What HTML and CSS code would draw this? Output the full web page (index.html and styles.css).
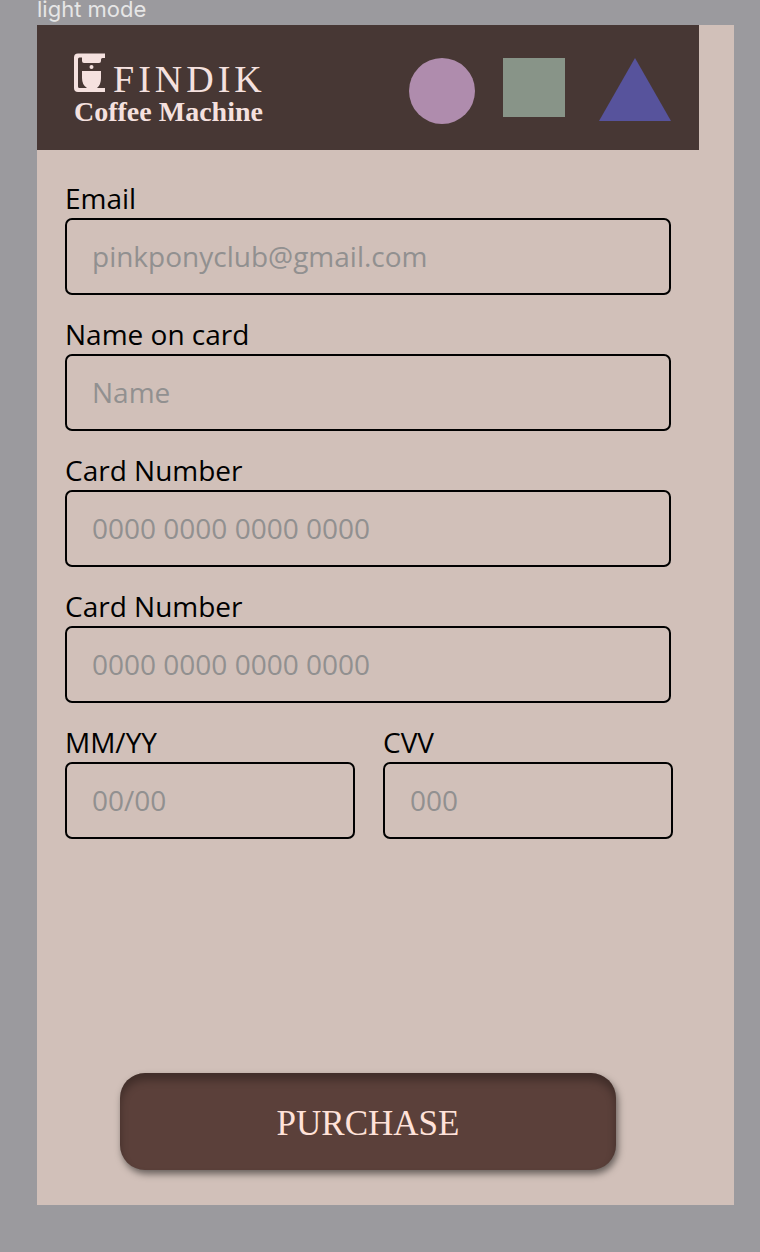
FILE: index.html
```html
<!DOCTYPE html>
<html lang="en">
<head>
    <meta charset="UTF-8">
    <meta name="viewport" content="width=device-width, initial-scale=1.0">
    <title>Findik Coffee Machine</title>
    <link rel="stylesheet" href="styles.css">
</head>
<body>
    <p class="mode">light mode</p>
    <div class="container">
        <header>
            <div class="logo">
                <div class="brand">
                    <svg width="31" height="39" viewBox="0 0 31 39" fill="#f5e1df" aria-hidden="true">
                        <path d="M4 .5H31V5H28.500Q27 5 27 6.500V8Q27 10 25 10H10Q8 10 8 8V4.500H5.500Q4 4.500 4 6V33.500Q4 35 5.500 35H13Q8 32 8 25V18H27V25Q27 32 23 35H31V39H4Q0 39 0 35V4.500Q0 .5 4 .5Z"/>
                        <circle cx="17.500" cy="14" r="2"/>
                    </svg>
                    <span class="name">FINDIK</span>
                </div>
                <div class="tagline">Coffee Machine</div>
            </div>
            <div class="shapes">
                <div class="circle"></div>
                <div class="square"></div>
                <svg width="78" height="63" viewBox="0 0 78 63" aria-hidden="true">
                    <path d="M42 0L78 63H6Z" fill="#57539c"/>
                </svg>
            </div>
        </header>

        <form>
            <div class="field">
                <label for="email">Email</label>
                <input type="email" id="email" placeholder="pinkponyclub@gmail.com">
            </div>
            <div class="field">
                <label for="name">Name on card</label>
                <input type="text" id="name" placeholder="Name">
            </div>
            <div class="field">
                <label for="card">Card Number</label>
                <input type="text" id="card" placeholder="0000 0000 0000 0000">
            </div>
            <div class="field">
                <label for="card2">Card Number</label>
                <input type="text" id="card2" placeholder="0000 0000 0000 0000">
            </div>
            <div class="row">
                <div class="field">
                    <label for="date">MM/YY</label>
                    <input type="text" id="date" placeholder="00/00">
                </div>
                <div class="field">
                    <label for="cvv">CVV</label>
                    <input type="text" id="cvv" placeholder="000">
                </div>
            </div>
            <button type="submit">PURCHASE</button>
        </form>
    </div>
</body>
</html>
```
FILE: styles.css
```css
* {
    box-sizing: border-box;
}

body {
    margin: 0;
    padding: 0 26px 47px 37px;
    background: #9b9a9e;
    font-family: "Open Sans", sans-serif;
    color: black;
}

.mode {
    margin: 0;
    height: 25px;
    font-family: Inter, sans-serif;
    font-size: 22px;
    line-height: 18px;
    color: #e6e6e6;
}

.container {
    background: #d1c0b9;
}

header {
    display: flex;
    justify-content: space-between;
    align-items: flex-start;
    margin-right: 35px;
    padding: 28px 28px 23px 37px;
    background: #473734;
}

.logo {
    font-family: "Liberation Serif", serif;
    color: #f5e1df;
}

.brand {
    display: flex;
    align-items: baseline;
    gap: 8px;
}

.name {
    font-size: 38px;
    line-height: 26px;
    letter-spacing: 4px;
}

.tagline {
    margin-top: 5px;
    font-size: 28px;
    font-weight: bold;
    line-height: 30px;
}

.shapes {
    display: flex;
    gap: 28px;
    margin-top: 5px;
}

.circle {
    width: 66px;
    height: 66px;
    border-radius: 50%;
    background: #af8cad;
}

.square {
    width: 62px;
    height: 59px;
    background: #889488;
}

form {
    display: flex;
    flex-direction: column;
    gap: 23px;
    padding: 32px 63px 35px 28px;
}

.field {
    flex: 1;
}

.row {
    display: flex;
    gap: 28px;
    margin-right: -2px;
}

label {
    display: block;
    margin-bottom: 4px;
    font-size: 28px;
    line-height: 32px;
}

input {
    display: block;
    width: 100%;
    height: 77px;
    padding: 0 25px 2px;
    border: 2px solid black;
    border-radius: 7px;
    background: transparent;
    font-family: inherit;
    font-size: 28px;
}

input::placeholder {
    color: #919090;
}

button {
    height: 97px;
    margin: 211px 55px 0;
    padding: 4px 0 0;
    border: none;
    border-radius: 25px;
    background: #5b403a;
    box-shadow: 2px 4px 7px rgba(0, 0, 0, 0.5), inset 0 7px 8px rgba(0, 0, 0, 0.3);
    font-family: "Liberation Serif", serif;
    font-size: 35px;
    color: #ffe2d9;
    cursor: pointer;
}
```
